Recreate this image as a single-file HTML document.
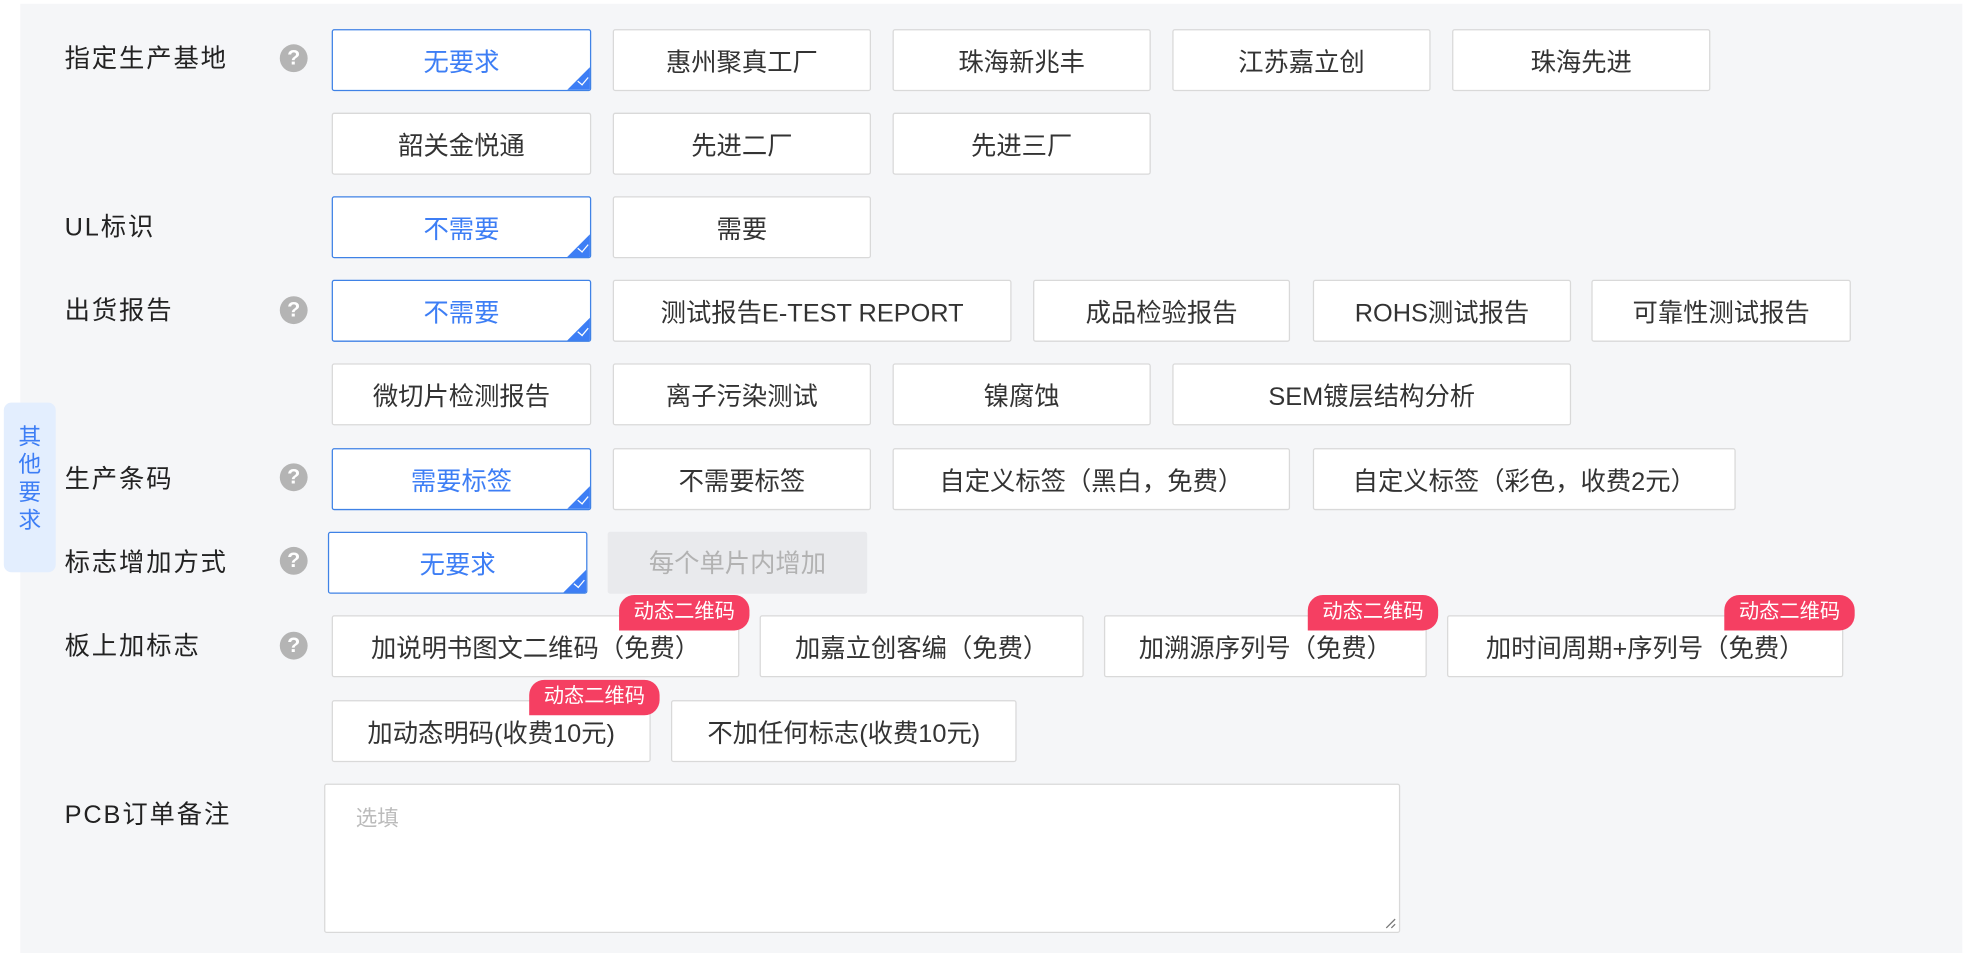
<!DOCTYPE html>
<html><head><meta charset="utf-8"><style>
*{box-sizing:border-box;margin:0;padding:0}
html,body{width:1986px;height:948px;overflow:hidden;background:#fff}
#w{position:absolute;left:0;top:0;width:1570px;height:750px;transform:scale(1.266);transform-origin:0 0;font-family:"Liberation Sans","Noto Sans CJK SC",sans-serif}
.bg{position:absolute;left:16px;top:3px;width:1534px;height:750px;background:#f5f6f8}
.lb{position:absolute;left:51px;font-size:20px;color:#222;letter-spacing:1.5px;line-height:24px}
.q{position:absolute;left:221px;width:22px;height:22px;border-radius:50%;background:#b4b4b4;color:#fff;font-weight:bold;font-size:17px;line-height:22px;text-align:center}
.b{position:absolute;height:49px;background:#fff;border:1px solid #d9d9d9;border-radius:2px;font-size:20px;color:#333;text-align:center;line-height:47px;padding-top:3px;white-space:nowrap}
.s{border:1.5px solid #3f82e6;color:#3d7ef5;overflow:hidden}
.s:after{content:"";position:absolute;right:0;bottom:0;border-style:solid;border-width:0 0 18px 18px;border-color:transparent transparent #3d7ef5 transparent}
.s:before{content:"";position:absolute;right:3px;bottom:4px;width:4px;height:7px;border:solid #fff;border-width:0 1.5px 1.5px 0;transform:rotate(40deg);z-index:2}
.d{background:#e9eaed;border:none;color:#b2b2b2}
.bd{position:absolute;height:28px;width:103px;background:#f53f62;color:#fff;font-size:16px;line-height:28px;text-align:center;border-radius:12px 12px 12px 0;z-index:3}
.tab{position:absolute;left:3px;top:318px;width:41px;height:134px;background:#e3eefe;border-radius:6px;color:#3d7ef5;font-size:18px;line-height:22px;text-align:center;padding-top:16px}
</style></head><body><div id="w">
<div class="bg"></div>
<div class="tab">其<br>他<br>要<br>求</div>

<div class="lb" style="top:35px">指定生产基地</div><div class="q" style="top:35px">?</div>
<div class="b s" style="left:262px;top:23px;width:205px">无要求</div>
<div class="b" style="left:484px;top:23px;width:204px">惠州聚真工厂</div>
<div class="b" style="left:705px;top:23px;width:204px">珠海新兆丰</div>
<div class="b" style="left:926px;top:23px;width:204px">江苏嘉立创</div>
<div class="b" style="left:1147px;top:23px;width:204px">珠海先进</div>
<div class="b" style="left:262px;top:89px;width:205px">韶关金悦通</div>
<div class="b" style="left:484px;top:89px;width:204px">先进二厂</div>
<div class="b" style="left:705px;top:89px;width:204px">先进三厂</div>

<div class="lb" style="top:168px">UL标识</div>
<div class="b s" style="left:262px;top:155px;width:205px">不需要</div>
<div class="b" style="left:484px;top:155px;width:204px">需要</div>

<div class="lb" style="top:234px">出货报告</div><div class="q" style="top:234px">?</div>
<div class="b s" style="left:262px;top:221px;width:205px">不需要</div>
<div class="b" style="left:484px;top:221px;width:315px">测试报告E-TEST REPORT</div>
<div class="b" style="left:816px;top:221px;width:203px">成品检验报告</div>
<div class="b" style="left:1037px;top:221px;width:204px">ROHS测试报告</div>
<div class="b" style="left:1257px;top:221px;width:205px">可靠性测试报告</div>
<div class="b" style="left:262px;top:287px;width:205px">微切片检测报告</div>
<div class="b" style="left:484px;top:287px;width:204px">离子污染测试</div>
<div class="b" style="left:705px;top:287px;width:204px">镍腐蚀</div>
<div class="b" style="left:926px;top:287px;width:315px">SEM镀层结构分析</div>

<div class="lb" style="top:367px">生产条码</div><div class="q" style="top:366px">?</div>
<div class="b s" style="left:262px;top:354px;width:205px">需要标签</div>
<div class="b" style="left:484px;top:354px;width:204px">不需要标签</div>
<div class="b" style="left:705px;top:354px;width:314px">自定义标签（黑白，免费）</div>
<div class="b" style="left:1037px;top:354px;width:334px">自定义标签（彩色，收费2元）</div>

<div class="lb" style="top:433px">标志增加方式</div><div class="q" style="top:432px">?</div>
<div class="b s" style="left:259px;top:420px;width:205px">无要求</div>
<div class="b d" style="left:480px;top:420px;width:205px">每个单片内增加</div>

<div class="lb" style="top:499px">板上加标志</div><div class="q" style="top:499px">?</div>
<div class="b" style="left:262px;top:486px;width:322px">加说明书图文二维码（免费）</div>
<div class="bd" style="left:489px;top:470px">动态二维码</div>
<div class="b" style="left:600px;top:486px;width:256px">加嘉立创客编（免费）</div>
<div class="b" style="left:872px;top:486px;width:255px">加溯源序列号（免费）</div>
<div class="bd" style="left:1033px;top:470px">动态二维码</div>
<div class="b" style="left:1143px;top:486px;width:313px">加时间周期+序列号（免费）</div>
<div class="bd" style="left:1362px;top:470px">动态二维码</div>
<div class="b" style="left:262px;top:553px;width:252px">加动态明码(收费10元)</div>
<div class="bd" style="left:418px;top:537px">动态二维码</div>
<div class="b" style="left:530px;top:553px;width:273px">不加任何标志(收费10元)</div>

<div class="lb" style="top:632px">PCB订单备注</div>
<div style="position:absolute;left:256px;top:619px;width:850px;height:118px;background:#fff;border:1px solid #d9d9d9;border-radius:2px">
<div style="position:absolute;left:24px;top:12px;font-size:17px;color:#bbb">选填</div>
<svg style="position:absolute;right:2px;bottom:2px" width="10" height="10"><path d="M9 2L2 9M9 6L6 9" stroke="#777" stroke-width="1"/></svg>
</div>
</div></body></html>
